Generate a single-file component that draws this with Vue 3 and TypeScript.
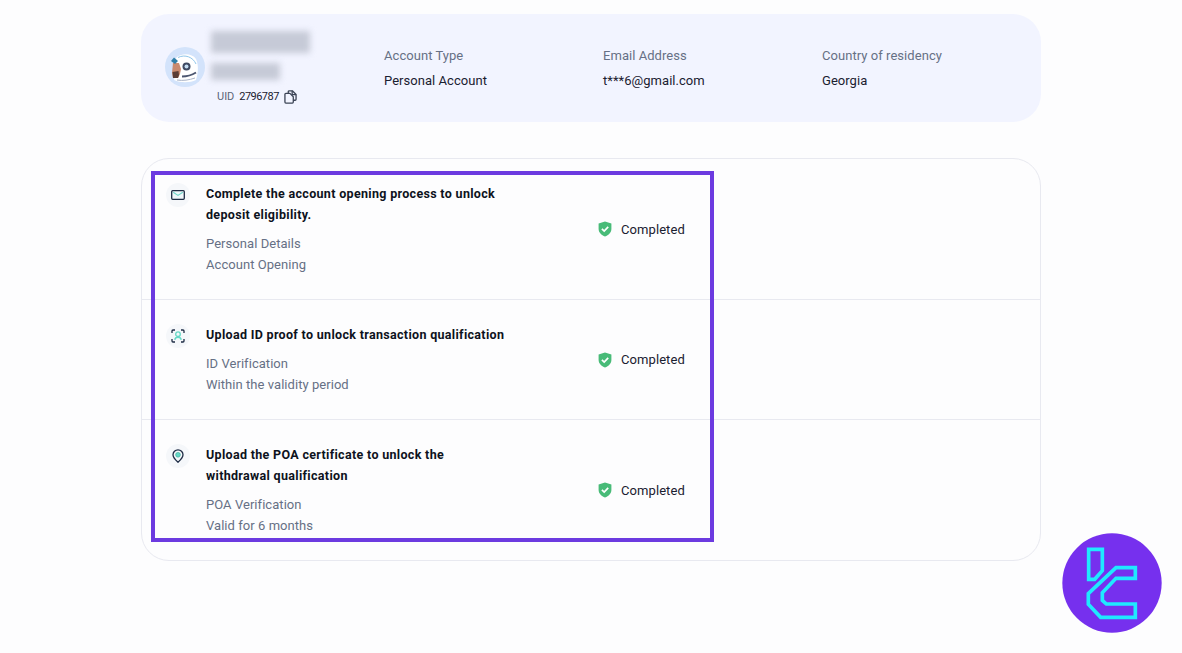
<script setup lang="ts">
interface Step {
  title: string[];
  lines: string[];
  icon: string;
}
const steps: Step[] = [
  { title: ['Complete the account opening process to unlock', 'deposit eligibility.'], lines: ['Personal Details', 'Account Opening'], icon: 'mail' },
  { title: ['Upload ID proof to unlock transaction qualification'], lines: ['ID Verification', 'Within the validity period'], icon: 'face' },
  { title: ['Upload the POA certificate to unlock the', 'withdrawal qualification'], lines: ['POA Verification', 'Valid for 6 months'], icon: 'pin' },
];
const infos = [
  { label: 'Account Type', value: 'Personal Account' },
  { label: 'Email Address', value: 't***6@gmail.com' },
  { label: 'Country of residency', value: 'Georgia' },
];
</script>

<template>
  <div class="page">
    <section class="profile">
      <div class="who">
        <svg class="avatar" viewBox="0 0 40 40" width="40" height="40">
          <circle cx="20" cy="20" r="20" fill="#d3e3fb" />
          <path d="M11 11 C16 6 27 6 31 12 C34 18 33 27 31 33 C25 36 15 36 9 33 L11 24 Z" fill="#fff" />
          <path d="M8 16 L14 16 L16 22 L15 27 L13 31 L8 31 L7 26 Z" fill="#c98a6e" />
          <path d="M7.5 25 L13.5 24 L14 28 L13 31 L8 31 Z" fill="#5a3d36" />
          <path d="M6 14 L9 10.5 L13 14 L10 17 Z" fill="#2f7fa8" />
          <path d="M13 10.5 C20 7 28 10 31 17" fill="none" stroke="#8fc6ea" stroke-width="1" />
          <path d="M17 29.5 C22 29.5 27 28 31 25.5" fill="none" stroke="#4c5670" stroke-width="2" />
          <path d="M12 33 C18 34 24 33 30 31" fill="none" stroke="#aab3c6" stroke-width="1" />
          <circle cx="21.5" cy="19.5" r="4" fill="#3f4a63" />
          <circle cx="21.5" cy="19.5" r="2" fill="#c3dcf2" />
        </svg>
        <div class="who-text">
          <div class="blur name"></div>
          <div class="blur sub"></div>
          <div class="uid">
            <span class="uid-label">UID</span>
            <span class="uid-num">2796787</span>
            <svg viewBox="0 0 14 15" width="13" height="14" fill="none" stroke="#3c4456" stroke-width="1.4" stroke-linejoin="round">
              <path d="M4.6 3.4 V1.8 A1 1 0 0 1 5.6 .8 H9 L13 4.8 V10 A1 1 0 0 1 12 11 H10" />
              <path d="M2 3.6 H6.4 L10 7.2 V13 A1 1 0 0 1 9 14 H2 A1 1 0 0 1 1 13 V4.6 A1 1 0 0 1 2 3.6 Z" />
              <path d="M8.8 .8 V5 H13" />
            </svg>
          </div>
        </div>
      </div>
      <div class="infos">
        <div v-for="i in infos" :key="i.label" class="info">
          <div class="info-label">{{ i.label }}</div>
          <div class="info-value">{{ i.value }}</div>
        </div>
      </div>
    </section>

    <section class="steps">
      <div v-for="s in steps" :key="s.icon" class="row">
        <div class="row-inner">
          <div class="badge">
            <svg v-if="s.icon === 'mail'" viewBox="0 0 14 10" width="14" height="10" fill="none">
              <rect x=".7" y=".7" width="12.6" height="8.6" rx="1" stroke="#1d2b44" stroke-width="1.3" fill="#eef6fa" />
              <path d="M2.2 2.2 L7 5.4 L11.8 2.2" stroke="#6fd6c8" stroke-width="1.2" />
            </svg>
            <svg v-else-if="s.icon === 'face'" viewBox="0 0 14 14" width="14" height="14" fill="none">
              <path d="M1 4 V2 A1 1 0 0 1 2 1 H4 M10 1 H12 A1 1 0 0 1 13 2 V4 M13 10 V12 A1 1 0 0 1 12 13 H10 M4 13 H2 A1 1 0 0 1 1 12 V10" stroke="#1d2b44" stroke-width="1.3" />
              <circle cx="7" cy="5.2" r="2.3" stroke="#64d8c6" stroke-width="1.3" />
              <path d="M3.8 10.8 C4.2 7.4 9.8 7.4 10.2 10.8" stroke="#64d8c6" stroke-width="1.3" />
            </svg>
            <svg v-else viewBox="0 0 14 14" width="14" height="14" fill="none">
              <path d="M7 13.2 C4 10.6 2 8.4 2 5.8 A5 5 0 0 1 12 5.8 C12 8.4 10 10.6 7 13.2 Z" stroke="#1d2b44" stroke-width="1.3" />
              <circle cx="7" cy="5.8" r="2.4" fill="#64d8c6" stroke="#3aa696" stroke-width=".6" />
            </svg>
          </div>
          <div class="body">
            <div class="title">
              <div v-for="t in s.title" :key="t">{{ t }}</div>
            </div>
            <div class="lines">
              <div v-for="l in s.lines" :key="l">{{ l }}</div>
            </div>
          </div>
          <div class="status">
            <svg viewBox="0 0 14 16" width="14" height="16">
              <path d="M7 .4 L13.4 2.6 V8 C13.4 11.6 10.6 14.2 7 15.6 C3.4 14.2 .6 11.6 .6 8 V2.6 Z" fill="#48bb78" />
              <path d="M3.9 7.8 L6.2 10 L10.2 5.8" fill="none" stroke="#fff" stroke-width="1.7" />
            </svg>
            <span>Completed</span>
          </div>
        </div>
      </div>
    </section>

    <div class="highlight"></div>

    <svg class="logo" viewBox="0 0 375 345" width="125" height="115">
      <circle cx="186" cy="174" r="149" fill="#7630ee" />
      <path
        d="M116 73 H157 V137 L134 163 H116 Z"
        fill="none" stroke="#1fe9ff" stroke-width="11"
      />
      <path
        d="M198 128 H256 V160 H198 L157 203 V226 L169 237 H256 V277 H152 L115 238 V206 Z"
        fill="none" stroke="#1fe9ff" stroke-width="11"
      />
    </svg>
  </div>
</template>

<style>
html, body { margin: 0; background: #fdfdfe; }
</style>

<style scoped>
.page {
  position: relative;
  width: 1182px;
  height: 653px;
  overflow: hidden;
  padding: 14px 141px 0;
  box-sizing: border-box;
  background: #fdfdfe;
  font-family: Roboto, "Liberation Sans", sans-serif;
  color: #1a2030;
}
.profile {
  height: 108px;
  box-sizing: border-box;
  background: #f2f4ff;
  border-radius: 28px;
  display: flex;
  align-items: center;
  padding-left: 24px;
}
.who {
  display: flex;
  gap: 6px;
  width: 219px;
  height: 108px;
  padding-top: 17px;
  box-sizing: border-box;
  flex: none;
}
.who > .avatar { margin-top: 16px; flex: none; }
.who-text {
  display: flex;
  flex-direction: column;
}
.blur {
  background: #c6cad7;
  filter: blur(3px);
}
.name { width: 99px; height: 22px; margin-bottom: 10px; }
.sub { width: 69px; height: 17px; margin-bottom: 10px; }
.uid {
  display: flex;
  align-items: center;
  font-size: 11px;
  line-height: 14px;
  margin-left: 6px;
  color: #3c4456;
}
.uid-label { margin-right: 5px; color: #5c6478; }
.uid-num { margin-right: 5px; color: #1a2030; letter-spacing: -.55px; }
.infos { display: flex; }
.info { width: 219px; }
.info-label {
  font-size: 13px;
  line-height: 20px;
  color: #667085;
  margin-bottom: 5px;
  letter-spacing: .05px;
}
.info-value {
  font-size: 13px;
  line-height: 20px;
  color: #1a2030;
  letter-spacing: .04px;
}
.steps {
  margin-top: 36px;
  border: 1px solid #e8e9f0;
  border-radius: 28px;
}
.row { padding: 24px; }
.row + .row { border-top: 1px solid #e8e9f0; }
.row-inner {
  display: flex;
  align-items: center;
  width: 520px;
}
.badge {
  width: 24px;
  height: 24px;
  border-radius: 50%;
  background: #f5f7fa;
  display: flex;
  align-items: center;
  justify-content: center;
  flex: none;
  align-self: flex-start;
  margin-right: 16px;
}
.body { width: 392px; flex: none; }
.title {
  font-size: 12.5px;
  font-weight: 700;
  line-height: 21px;
  color: #0d1220;
  letter-spacing: .32px;
}
.lines {
  margin-top: 8px;
  font-size: 13px;
  line-height: 21px;
  color: #667085;
  letter-spacing: .05px;
}
.status {
  display: flex;
  align-items: center;
  gap: 9px;
  font-size: 13px;
  letter-spacing: .08px;
  color: #1a2030;
}
.highlight {
  position: absolute;
  left: 151px;
  top: 171px;
  width: 563px;
  height: 371px;
  box-sizing: border-box;
  border: 4px solid #6c3ae0;
  pointer-events: none;
}
.logo {
  position: absolute;
  left: 1050px;
  top: 525px;
}
</style>
